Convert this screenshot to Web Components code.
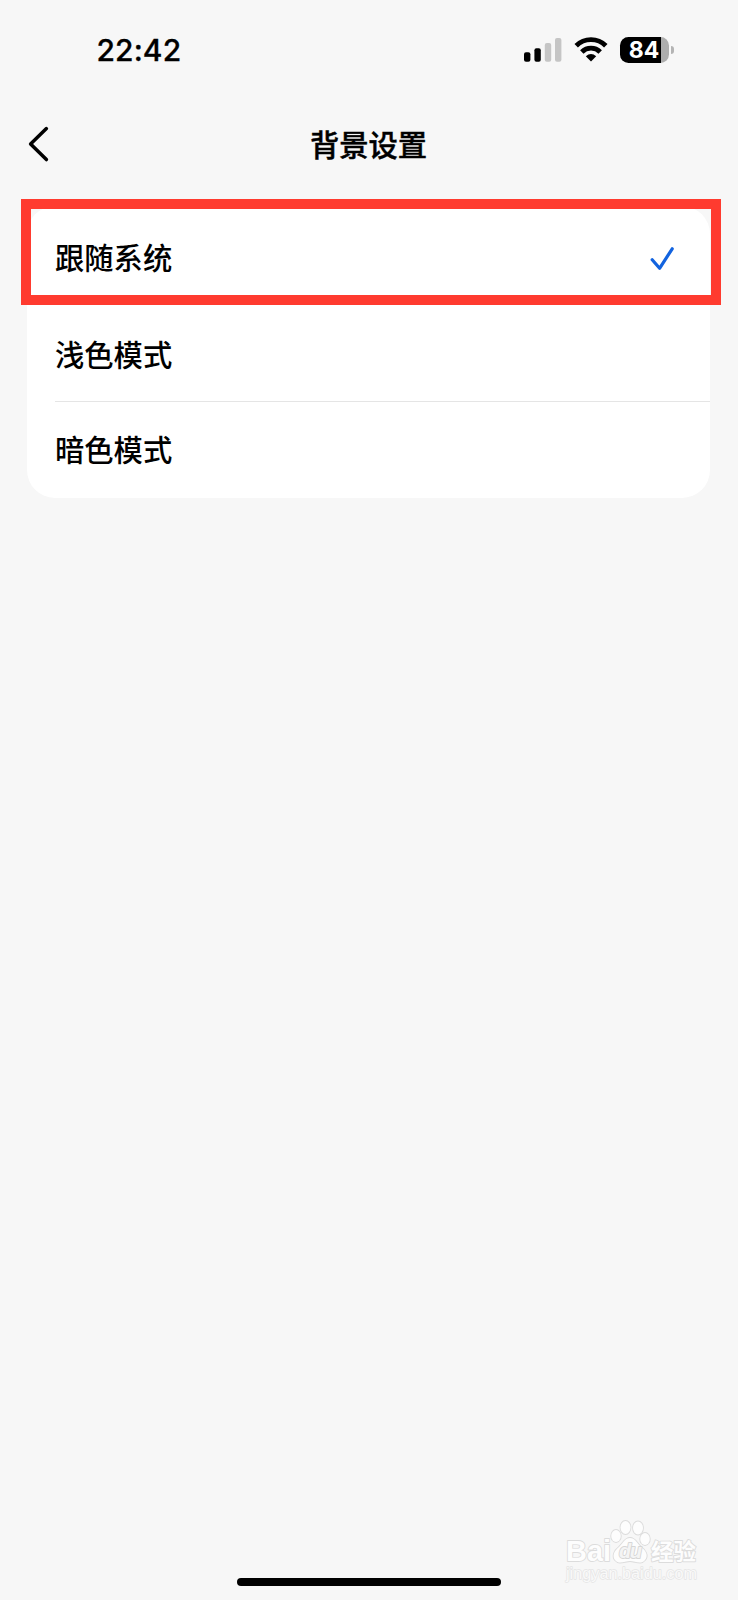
<!DOCTYPE html>
<html lang="zh-CN">
<head>
<meta charset="utf-8">
<title>背景设置</title>
<style>
html,body{margin:0;height:100%;background:#f7f7f7}
body{font-family:Inter,"Noto Sans CJK SC",sans-serif;color:#000;overflow:hidden}
</style>
</head>
<body>
<settings-screen></settings-screen>
<script>
function define(name, html) {
  const t = document.createElement('template');
  t.innerHTML = html;
  customElements.define(name, class extends HTMLElement {
    constructor() {
      super();
      this.attachShadow({mode: 'open'}).append(t.content.cloneNode(true));
    }
  });
}

define('status-bar', `<style>
:host{display:flex;height:98px;box-sizing:border-box;padding:0 64px 0 96.5px;justify-content:space-between;align-items:center}
.time{font-size:30px;font-weight:550;line-height:40px;letter-spacing:.1px;padding-top:2px;-webkit-text-stroke:.3px #000}
svg{display:block}
.icons{display:flex;align-items:center;padding-top:1px}
.signal{margin-right:12px}
.wifi{margin-right:12px}
.battery{display:flex;align-items:center}
.level{width:49px;height:26px;border-radius:8.5px;background:linear-gradient(90deg,#000 41px,#adadad 41px);color:#fff;font-size:23px;font-weight:650;line-height:26px;text-align:center;box-sizing:border-box;padding-right:1px}
.tip{width:3px;height:8px;margin-left:2px;border-radius:0 4px 4px 0;background:#b4b4b4}
</style>
<div class="time">22:42</div>
<div class="icons">
<svg class="signal" width="38" height="26" viewBox="0 0 38 26"><g><rect x="0" y="15.2" width="6.4" height="9.5" rx="2"/><rect x="10.4" y="11.2" width="6.4" height="13.5" rx="2"/></g><g fill="#c5c5c5"><rect x="20.8" y="6" width="6.4" height="18.7" rx="2"/><rect x="31" y="1" width="6.4" height="23.7" rx="2"/></g></svg>
<svg class="wifi" width="34" height="26" viewBox="0 0 34 26"><g fill="none" stroke="#000" stroke-width="4.9"><path d="M2.2 8.7A21 21 0 0 1 31.8 8.7"/><path d="M7.8 14.9A13.2 13.2 0 0 1 26.2 14.9"/></g><path d="M17 24.5L11.8 19.3Q17 14.6 22.2 19.3Z"/></svg>
<div class="battery"><div class="level">84</div><div class="tip"></div></div>
</div>`);

define('nav-bar', `<style>
:host{display:grid;grid-template-columns:80px 1fr 80px;align-items:center;height:92px}
svg{display:block;margin-left:27px}
.title{text-align:center;font:500 29.3px/44px "Noto Sans CJK SC",sans-serif;-webkit-text-stroke:.45px #000;padding:0 1px 2px 0}
</style>
<svg width="24" height="38" viewBox="0 0 24 38"><path d="M19.4 3.6L3.6 19L19.4 34.6" fill="none" stroke="#000" stroke-width="3.5" stroke-linecap="round" stroke-linejoin="round"/></svg>
<div class="title"><slot></slot></div>`);

define('option-row', `<style>
:host{display:flex;height:96px;box-sizing:border-box;margin-left:28px;padding-right:35px;align-items:center;justify-content:space-between;font:500 29.3px/44px "Noto Sans CJK SC",sans-serif}
:host([divided]){border-bottom:1px solid #e5e5e5}
span{padding-bottom:4px}
:host([divided]) span{padding-bottom:2px}
svg{display:none;margin-top:2px}
:host([checked]) svg{display:block}
</style>
<span><slot></slot></span>
<svg width="25" height="24" viewBox="0 0 25 24"><path d="M2.2 12.7L9.6 21.3L22.2 1.8" fill="none" stroke="#1263df" stroke-width="3.2" stroke-linecap="round" stroke-linejoin="round"/></svg>`);

define('option-card', `<style>
:host{display:block;position:relative;margin:16px 28px 0 27px;border-radius:28px;background:#fff;height:292px;box-sizing:border-box;padding-top:4px}
.mark{position:absolute;left:-6px;top:-7px;width:700px;height:106px;box-sizing:border-box;border:10px solid #ff3b2f}
</style><slot></slot><div class="mark"></div>`);

define('site-watermark', `<style>
:host{position:absolute;left:565px;top:1516px;width:136px;height:70px}
svg{display:block;overflow:visible}
text{font-family:"Liberation Sans","Noto Sans CJK SC",sans-serif}
</style>
<svg width="136" height="70" viewBox="0 0 136 70" fill="#fdfdfd" stroke="#dcdcdc" stroke-width="1.8" paint-order="stroke" stroke-linejoin="round">
<text x="1" y="45" font-size="30" font-weight="700" textLength="45" lengthAdjust="spacingAndGlyphs">Bai</text>
<g stroke-width="1.8"><ellipse cx="51" cy="20" rx="4.8" ry="6"/><ellipse cx="60.5" cy="11.5" rx="5" ry="6.5"/><ellipse cx="73" cy="12" rx="5" ry="6.5"/><ellipse cx="80" cy="23" rx="4.8" ry="6"/>
<path d="M65 22C60 22 58 27 54 31C49 35 47 40 50 44C54 49 60 45 65 45S76 49 80 44C84 39 80 34 76 31C72 27 70 22 65 22Z"/></g>
<text x="54" y="42" font-size="20" font-weight="700" font-style="italic" textLength="23" fill="#f4f4f4" stroke="#d6d6d6" stroke-width="1.8">du</text>
<text x="86" y="43.5" font-size="22.5" font-weight="700" textLength="45" style="font-family:'Noto Sans CJK SC',sans-serif">经验</text>
<text x="1" y="63" font-size="16" textLength="131" lengthAdjust="spacingAndGlyphs" fill="#f9f9f9" stroke="#e4e4e4" stroke-width="1.3">jingyan.baidu.com</text>
</svg>`);

define('home-indicator', `<style>
:host{display:block;width:264px;height:8.5px;border-radius:5px;background:#000;margin:auto auto 14px}
</style>`);

define('settings-screen', `<style>
:host{display:flex;flex-direction:column;position:relative;width:738px;height:1600px;background:#f7f7f7;overflow:hidden}
</style>
<status-bar></status-bar>
<nav-bar>背景设置</nav-bar>
<option-card><option-row checked>跟随系统</option-row><option-row divided>浅色模式</option-row><option-row>暗色模式</option-row></option-card>
<site-watermark></site-watermark>
<home-indicator></home-indicator>`);
</script>
</body>
</html>
